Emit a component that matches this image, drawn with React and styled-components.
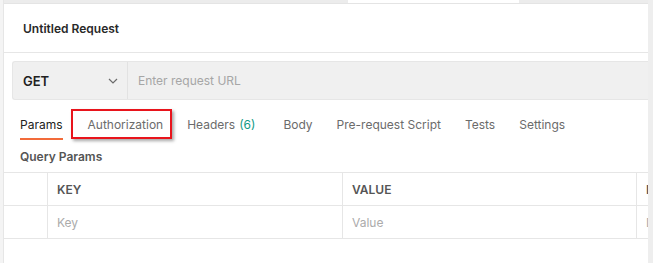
import React from "react";
import styled, { createGlobalStyle } from "styled-components";

const GlobalStyle = createGlobalStyle`
	html, body {
		margin: 0;
		padding: 0;
		background: #ffffff;
		font-family: Inter, "Noto Sans", sans-serif;
		overflow: hidden;
	}
`;

const Frame = styled.div`
	display: flex;
	width: 653px;
	height: 263px;
	overflow: hidden;
`;

const Gutter = styled.div`
	width: 3px;
	flex: none;
	background: #f4f4f4;
	border-right: 1px solid #e6e6e6;
`;

const Scrollbar = styled.div`
	width: 5px;
	flex: none;
	background: #eeeeee;
`;

const Main = styled.div`
	flex: 1;
	min-width: 0;
	display: flex;
	flex-direction: column;
	position: relative;
	overflow: hidden;
`;

const TabStrip = styled.div`
	display: flex;
	height: 3px;
	border-bottom: 1px solid #e4e4e4;
	background: #ececec;
`;

const StripGap = styled.div`
	width: ${(p) => p.$w}px;
	flex: ${(p) => (p.$w ? "none" : 1)};
	background: ${(p) => (p.$active ? "#ffffff" : "transparent")};
`;

const Header = styled.div`
	height: 48px;
	display: flex;
	align-items: center;
	padding-left: 19px;
	font-size: 12px;
	font-weight: 600;
	color: #282828;
	border-bottom: 1px solid #e6e6e6;
`;

const UrlBar = styled.div`
	display: flex;
	height: 37px;
	margin: 8px 0 0 8px;
	background: #f0f0f0;
	border: 1px solid #e6e6e6;
	border-right: none;
	border-radius: 3px 0 0 3px;
`;

const Method = styled.div`
	width: 115px;
	flex: none;
	display: flex;
	align-items: center;
	justify-content: space-between;
	padding: 0 9px 0 10px;
	box-sizing: border-box;
	font-size: 13px;
	font-weight: 600;
	color: #212121;
	border-right: 1px solid #e2e2e2;
`;

const UrlInput = styled.div`
	display: flex;
	align-items: center;
	padding-left: 10px;
	font-size: 12px;
	color: #a6a6a6;
`;

const Tabs = styled.div`
	display: flex;
	height: 31px;
	margin-top: 9px;
	padding-left: 16px;
`;

const Tab = styled.div`
	display: flex;
	align-items: center;
	height: 100%;
	box-sizing: border-box;
	margin-right: ${(p) => p.$gap}px;
	font-size: 12px;
	color: ${(p) => (p.$active ? "#212121" : "#6b6b6b")};
	border-bottom: 2px solid ${(p) => (p.$active ? "#f26b3a" : "transparent")};
	padding-top: 2px;
	white-space: nowrap;
`;

const Count = styled.span`
	color: #0f9a86;
	margin-left: 4px;
`;

const Callout = styled.div`
	position: absolute;
	left: 67px;
	top: 109px;
	width: 97px;
	height: 26px;
	border: 2px solid #e8141c;
	box-shadow: 2px 2px 3px rgba(0, 0, 0, 0.35);
	pointer-events: none;
`;

const SectionTitle = styled.div`
	height: 32px;
	display: flex;
	align-items: center;
	padding-left: 16px;
	padding-top: 1px;
	box-sizing: border-box;
	font-size: 12px;
	font-weight: 600;
	color: #555555;
`;

const Table = styled.div`
	display: grid;
	grid-template-columns: 44px 295px 294px 120px;
	margin-left: -1px;
`;

const Cell = styled.div`
	height: 32px;
	display: flex;
	align-items: center;
	padding-left: 9px;
	font-size: 12px;
	white-space: nowrap;
	overflow: hidden;
	border-top: 1px solid #e6e6e6;
	border-left: ${(p) => (p.$first ? "none" : "1px solid #e6e6e6")};
	border-bottom: ${(p) => (p.$last ? "1px solid #e6e6e6" : "none")};
	font-weight: ${(p) => (p.$head ? 600 : 400)};
	color: ${(p) => (p.$head ? "#555555" : "#ababab")};
`;

const columns = ["KEY", "VALUE", "DESCRIPTION"];
const placeholders = ["Key", "Value", "Description"];

const Chevron = () => (
	<svg width="10" height="6" viewBox="0 0 10 6" fill="none">
		<path d="M1 1l4 4 4-4" stroke="#6b6b6b" strokeWidth="1.2" />
	</svg>
);

const App = () => (
	<>
		<GlobalStyle />
		<Frame>
			<Gutter />
			<Main>
				<TabStrip>
					<StripGap $w={344} />
					<StripGap $w={171} $active />
					<StripGap />
				</TabStrip>
				<Header>Untitled Request</Header>
				<UrlBar>
					<Method>
						GET
						<Chevron />
					</Method>
					<UrlInput>Enter request URL</UrlInput>
				</UrlBar>
				<Tabs>
					<Tab $active $gap={25}>Params</Tab>
					<Tab $gap={24}>Authorization</Tab>
					<Tab $gap={28}>
						Headers<Count>(6)</Count>
					</Tab>
					<Tab $gap={24}>Body</Tab>
					<Tab $gap={24}>Pre-request Script</Tab>
					<Tab $gap={24}>Tests</Tab>
					<Tab $gap={24}>Settings</Tab>
				</Tabs>
				<Callout />
				<SectionTitle>Query Params</SectionTitle>
				<Table>
					<Cell $first $head />
					{columns.map((c) => (
						<Cell key={c} $head>
							{c}
						</Cell>
					))}
					<Cell $first $last />
					{placeholders.map((c) => (
						<Cell key={c} $last>
							{c}
						</Cell>
					))}
				</Table>
			</Main>
			<Scrollbar />
		</Frame>
	</>
);

export default App;
